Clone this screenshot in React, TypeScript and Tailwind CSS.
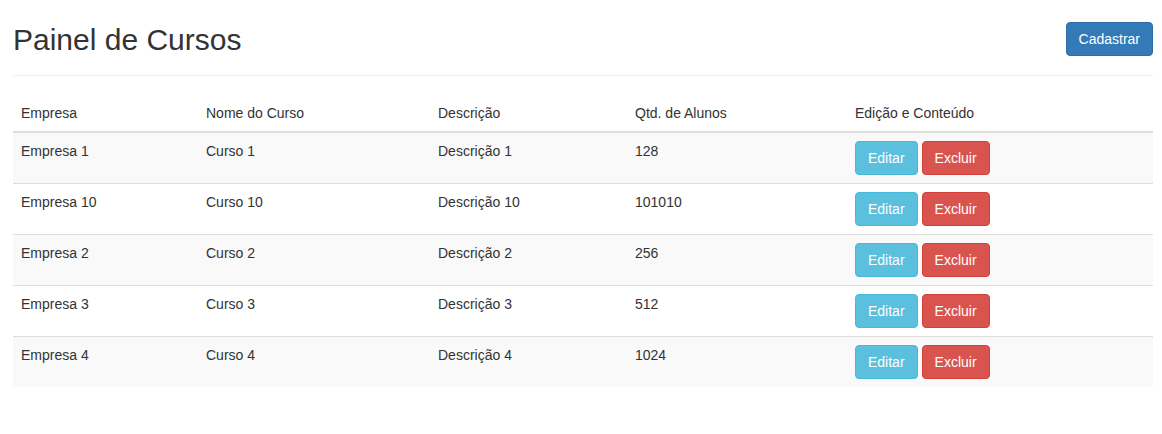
const cursos = [
  { empresa: "Empresa 1", nome: "Curso 1", descricao: "Descrição 1", alunos: "128" },
  { empresa: "Empresa 10", nome: "Curso 10", descricao: "Descrição 10", alunos: "101010" },
  { empresa: "Empresa 2", nome: "Curso 2", descricao: "Descrição 2", alunos: "256" },
  { empresa: "Empresa 3", nome: "Curso 3", descricao: "Descrição 3", alunos: "512" },
  { empresa: "Empresa 4", nome: "Curso 4", descricao: "Descrição 4", alunos: "1024" },
];

export default function App() {
  return (
    <div className="min-h-[434px] bg-white pl-[13px] pr-[9px] text-[14px] leading-[20px] text-[#333] font-['Liberation_Sans',Arial,sans-serif]">
      <div className="flex items-center justify-between border-b border-[#eee] pt-[22px] pb-[19px]">
        <h2 className="text-[30px] leading-[33px] font-normal">Painel de Cursos</h2>
        <button className="h-[34px] rounded-[4px] border border-[#2e6da4] bg-[#337ab7] px-[12px] text-white">
          Cadastrar
        </button>
      </div>

      <table className="mt-[19px] w-[1140px] table-fixed border-collapse text-left">
        <thead>
          <tr>
            <th className="w-[185px] border-b-2 border-[#ddd] p-[8px] font-normal">Empresa</th>
            <th className="w-[232px] border-b-2 border-[#ddd] p-[8px] font-normal">Nome do Curso</th>
            <th className="w-[197px] border-b-2 border-[#ddd] p-[8px] font-normal">Descrição</th>
            <th className="w-[220px] border-b-2 border-[#ddd] p-[8px] font-normal">Qtd. de Alunos</th>
            <th className="w-[306px] border-b-2 border-[#ddd] p-[8px] font-normal">Edição e Conteúdo</th>
          </tr>
        </thead>
        <tbody>
          {cursos.map((c, i) => (
            <tr key={c.empresa} className={i % 2 === 0 ? "bg-[#f9f9f9]" : "bg-white"}>
              <td className="border-t border-[#ddd] p-[8px] align-top">{c.empresa}</td>
              <td className="border-t border-[#ddd] p-[8px] align-top">{c.nome}</td>
              <td className="border-t border-[#ddd] p-[8px] align-top">{c.descricao}</td>
              <td className="border-t border-[#ddd] p-[8px] align-top">{c.alunos}</td>
              <td className="border-t border-[#ddd] p-[8px] align-top">
                <div className="flex gap-[4px]">
                  <button className="h-[34px] rounded-[4px] border border-[#46b8da] bg-[#5bc0de] px-[12px] text-white">
                    Editar
                  </button>
                  <button className="h-[34px] rounded-[4px] border border-[#d43f3a] bg-[#d9534f] px-[12px] text-white">
                    Excluir
                  </button>
                </div>
              </td>
            </tr>
          ))}
        </tbody>
      </table>
    </div>
  );
}
